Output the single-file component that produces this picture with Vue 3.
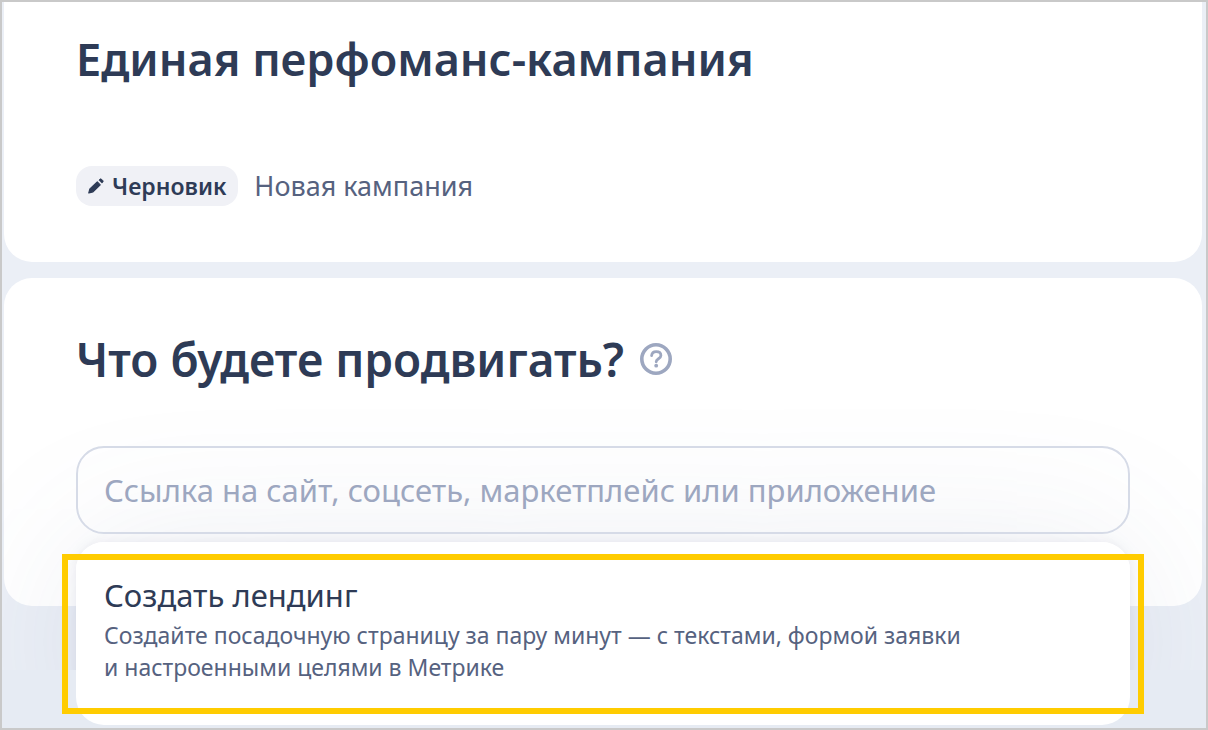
<script setup>
import { ref } from 'vue'

const link = ref('')
</script>

<template>
  <main class="page">
    <header class="card head">
      <h1 class="title">Единая перфоманс-кампания</h1>
      <div class="meta">
        <span class="badge">
          <svg class="pencil" viewBox="0 0 16 16" aria-hidden="true">
            <path d="M.8 15 1.900 10.900 9.300 3.900 12.200 6.900 5 13.800Z" stroke-width="1.2" stroke-linejoin="round" />
            <path d="M11 2.1 12 1.1Q12.8.5 13.6 1.3L14.9 2.6Q15.500 3.4 14.9 4.1L13.9 5.1Z" stroke-width=".8" stroke-linejoin="round" />
          </svg>
          Черновик
        </span>
        <span class="name">Новая кампания</span>
      </div>
    </header>

    <section class="card promo">
      <div class="heading">
        <h2 class="title subtitle"><label for="promo-link">Что будете продвигать?</label></h2>
        <button class="help" type="button" aria-label="Справка">
          <svg viewBox="0 0 32 32" aria-hidden="true">
            <circle cx="16" cy="16" r="14.2" stroke-width="3.6" />
            <path d="M11.6 12.6C11.9 10 13.6 8.600 16.200 8.600c2.800 0 4.700 1.500 4.700 3.800 0 3.500-4.700 3.200-4.700 6.400" stroke-width="2.800" />
            <circle class="dot" cx="16.200" cy="22.700" r="1.900" />
          </svg>
        </button>
      </div>
      <div class="field">
        <input id="promo-link" v-model="link" class="input" type="text" placeholder="Ссылка на сайт, соцсеть, маркетплейс или приложение" />
        <div class="menu">
          <button class="option" type="button">
            <span class="option-title">Создать лендинг</span>
            <span class="option-text">Создайте посадочную страницу за пару минут — с текстами, формой заявки<br />и настроенными целями в Метрике</span>
          </button>
        </div>
      </div>
    </section>

    <div class="bottom"></div>
  </main>
</template>

<style>
body {
  margin: 0;
}
</style>

<style scoped>
.page {
  box-sizing: border-box;
  min-height: 100vh;
  display: flex;
  flex-direction: column;
  gap: 16px;
  padding: 0 4px 0 2px;
  border: 2px solid #c9c9c9;
  background: #ebeff6;
  overflow: hidden;
  color: #2e3b56;
  font-family: "Noto Sans", "Open Sans", sans-serif;
}
.card {
  padding: 0 72px;
  background: #fff;
  border-radius: 28px;
}
.head {
  padding-top: 26px;
  padding-bottom: 56px;
  border-radius: 0 0 28px 28px;
}
.title {
  margin: 0;
  font-size: 45px;
  line-height: 62px;
  font-weight: 600;
}
.subtitle {
  font-size: 46px;
}
.meta {
  display: flex;
  align-items: center;
  gap: 16px;
  margin-top: 76px;
}
.badge {
  display: flex;
  align-items: center;
  gap: 8px;
  padding: 0 12px;
  border-radius: 16px;
  background: #f0f1f6;
  font-size: 23px;
  line-height: 40px;
  font-weight: 600;
}
.pencil {
  width: 16px;
  height: 16px;
  fill: #2e3b56;
  stroke: #2e3b56;
}
.name {
  color: #56627f;
  font-size: 27px;
  line-height: 40px;
}
.promo {
  padding-top: 50px;
  padding-bottom: 72px;
}
.heading {
  display: flex;
  align-items: center;
  gap: 16px;
}
.help {
  width: 32px;
  height: 32px;
  padding: 0;
  border: 0;
  background: none;
}
.help svg {
  display: block;
  fill: none;
  stroke: #9da7c0;
  stroke-linecap: round;
}
.help .dot {
  fill: #9da7c0;
  stroke: none;
}
.field {
  position: relative;
  margin-top: 56px;
}
.field::before {
  content: "";
  position: absolute;
  top: 96px;
  right: 0;
  left: 0;
  height: 184px;
  border-radius: 28px;
  box-shadow: 0 8px 160px rgba(90, 110, 150, 0.12), 0 0 12px rgba(80, 80, 130, 0.1);
}
.input {
  position: relative;
  display: block;
  box-sizing: border-box;
  width: 100%;
  height: 88px;
  padding: 0 26px;
  border: 2px solid #d6dbe7;
  border-radius: 28px;
  outline: 0;
  background: none;
  color: #2e3b56;
  font: 400 31px "Noto Sans", "Open Sans", sans-serif;
}
.input::placeholder {
  color: #9da7c0;
  opacity: 1;
}
.menu {
  position: absolute;
  z-index: 2;
  top: 96px;
  right: 0;
  left: 0;
  padding: 12px 0 11px;
  border-radius: 28px;
  background: #fff;
}
.option {
  display: block;
  box-sizing: border-box;
  width: calc(100% + 28px);
  margin: 0 -14px;
  padding: 15px 36px 25px;
  border: 6px solid #fc0;
  background: none;
  font-family: inherit;
  text-align: left;
}
.option-title,
.option-text {
  display: block;
}
.option-title {
  margin-bottom: 4px;
  color: #2e3b56;
  font-size: 31px;
  line-height: 40px;
}
.option-text {
  color: #56627f;
  font-size: 23px;
  line-height: 32px;
}
.bottom {
  position: relative;
  z-index: 1;
  flex: 1;
  margin: 48px -4px 0 -2px;
  background: #e6ebf3;
}
</style>
